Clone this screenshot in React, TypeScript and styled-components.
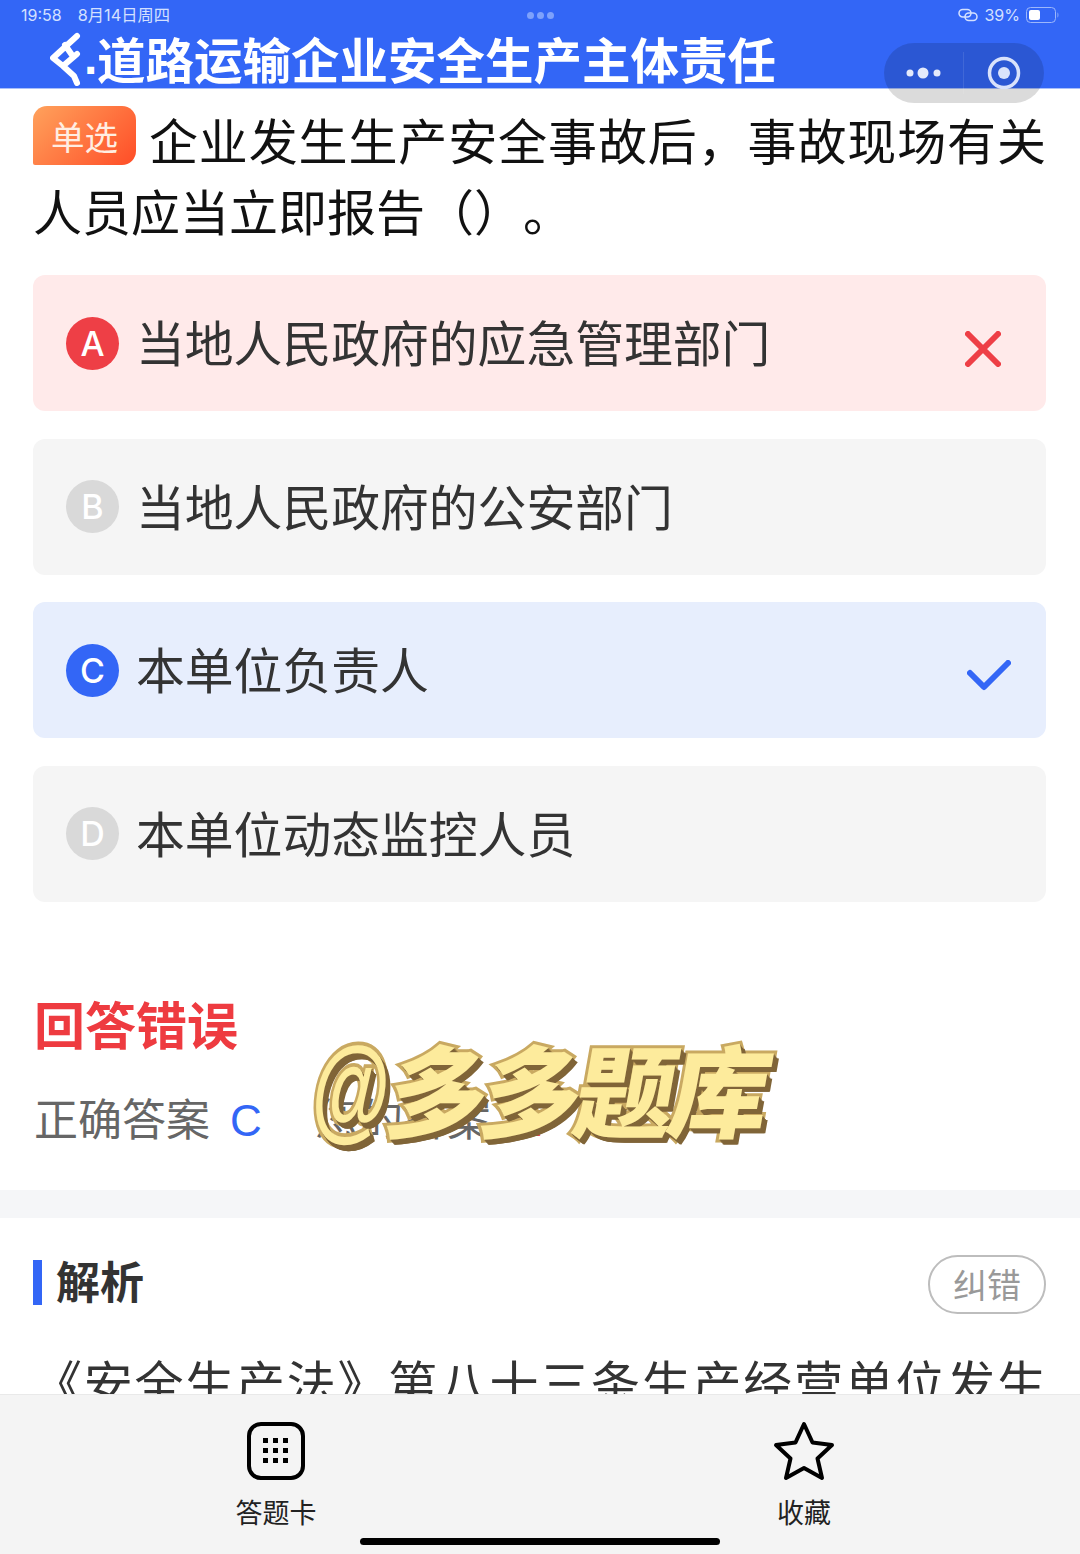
import React from "react";
import styled, { createGlobalStyle } from "styled-components";

const Global = createGlobalStyle`
  html, body { margin: 0; padding: 0; background: #fff; }
  body { font-family: "Noto Sans CJK SC", "Liberation Sans", sans-serif; text-spacing-trim: space-all; }
  * { box-sizing: border-box; }
`;

const Page = styled.div`
  position: relative;
  width: 1080px;
  height: 1554px;
  overflow: hidden;
  display: flex;
  flex-direction: column;
  background: #fff;
`;

const Header = styled.header`
  flex: none;
  height: 89px;
  background: #3366f6;
  border-bottom: 1px solid #a9bffa;
  overflow: hidden;
  color: #fff;
`;

const StatusBar = styled.div`
  height: 30px;
  padding: 0 20px 0 21px;
  display: grid;
  grid-template-columns: 1fr auto 1fr;
  align-items: center;
  font: 16px/20px "Inter", "Noto Sans CJK SC", sans-serif;
  color: #d4e0ff;
`;

const StatusLeft = styled.div`
  display: flex;
  align-items: baseline;
  gap: 16px;
`;

const StatusDate = styled.span`
  font-size: 16.3px;
`;

const StatusRight = styled.div`
  display: flex;
  justify-content: flex-end;
  align-items: center;
  gap: 6px;
`;

const CenterDots = styled.div`
  display: flex;
  gap: 3px;
`;

const CenterDot = styled.i`
  width: 7px;
  height: 7px;
  border-radius: 50%;
  background: #7ea1fb;
`;

const TitleRow = styled.div`
  display: flex;
  align-items: center;
  height: 60px;
  margin-top: -2px;
  padding-left: 50px;
`;

const Title = styled.h1`
  margin: 0;
  font-size: 48.5px;
  line-height: 60px;
  font-weight: 700;
  white-space: nowrap;
`;

const Dot = styled.span`
  width: 13px;
  font-size: 48px;
  line-height: 60px;
  font-weight: 700;
  font-family: "Liberation Sans", sans-serif;
`;

const Capsule = styled.div`
  position: absolute;
  left: 884px;
  top: 43px;
  width: 160px;
  height: 60px;
  border-radius: 30px;
  background: rgba(0, 0, 0, 0.14);
  display: grid;
  grid-template-columns: 80px 80px;
  z-index: 5;
`;

const CapsuleCell = styled.div<{ $line?: boolean }>`
  display: flex;
  align-items: center;
  justify-content: center;
  margin: 9px 0 0;
  height: 42px;
  border-right: ${(p) => (p.$line ? "1px solid rgba(255,255,255,0.1)" : "none")};
`;

const Scroller = styled.main`
  flex: 1;
  min-height: 0;
  overflow: hidden;
`;

const Question = styled.div`
  padding: 14px 34px 0 33px;
  margin-bottom: 30px;
  font-size: 49px;
  line-height: 71px;
  text-align: justify;
  color: #111;
`;

const Tag = styled.span`
  display: inline-block;
  width: 103px;
  height: 59px;
  margin: 0 12px 0 0;
  border-radius: 14px 14px 14px 2px;
  background: linear-gradient(135deg, #ffa25c 0%, #ff4d27 100%);
  color: #ffeee2;
  font-size: 33.5px;
  line-height: 59px;
  text-align: center;
  vertical-align: 10px;
`;

const Options = styled.div`
  display: flex;
  flex-direction: column;
  gap: 27.67px;
  padding: 0 34px 0 33px;
`;

const Option = styled.div<{ $bg: string }>`
  height: 136px;
  padding-left: 33px;
  border-radius: 12px;
  background: ${(p) => p.$bg};
  display: flex;
  align-items: center;
`;

const Letter = styled.span<{ $bg: string }>`
  flex: none;
  width: 53px;
  height: 53px;
  border-radius: 50%;
  background: ${(p) => p.$bg};
  color: #fff;
  font: 500 34px/53px "Inter", "Liberation Sans", sans-serif;
  text-align: center;
`;

const OptionText = styled.span`
  margin: 0 0 4px 17px;
  font-size: 48.8px;
  line-height: 60px;
  color: #333;
  white-space: nowrap;
`;

const Mark = styled.span<{ $right: number }>`
  margin-left: auto;
  margin-right: ${(p) => p.$right}px;
  margin-top: 11px;
  display: flex;
`;

const Result = styled.section`
  padding: 91px 34px 39px;
`;

const Verdict = styled.div`
  font-size: 51px;
  line-height: 60px;
  font-weight: 700;
  color: #ee3b40;
`;

const Answers = styled.div`
  margin-top: 34px;
  display: flex;
  font-size: 44px;
  line-height: 60px;
  color: #666;
`;

const Answer = styled.div`
  width: 281px;
`;

const AnswerLetter = styled.span<{ $color: string }>`
  margin-left: 20px;
  font-family: "Liberation Sans", sans-serif;
  color: ${(p) => p.$color};
`;

const Band = styled.div`
  height: 28px;
  background: #f5f6f8;
`;

const AnalysisHead = styled.div`
  margin-top: 37px;
  padding: 0 34px 0 33px;
  height: 59px;
  display: flex;
  align-items: center;
`;

const AnalysisBar = styled.i`
  width: 9px;
  height: 45px;
  margin-bottom: 4px;
  background: #3366f6;
`;

const AnalysisTitle = styled.h2`
  margin: 0 0 8px 14px;
  font-size: 44px;
  line-height: 56px;
  font-weight: 700;
  color: #333;
`;

const Report = styled.button`
  margin-left: auto;
  width: 118px;
  height: 59px;
  padding: 0;
  border: 2px solid #bdbdbd;
  border-radius: 30px;
  background: #fff;
  color: #999;
  font: 34px/52px "Noto Sans CJK SC", sans-serif;
`;

const Analysis = styled.p`
  margin: 31px 0 0;
  padding: 0 34px 0 33px;
  font-size: 49px;
  line-height: 71px;
  text-align: justify;
  color: #333;
`;

const BottomBar = styled.nav`
  flex: none;
  height: 160px;
  background: #f4f4f4;
  border-top: 1px solid #e9e9e9;
  display: flex;
  justify-content: center;
  gap: 444px;
`;

const NavItem = styled.div`
  width: 84px;
  padding-top: 26px;
  display: flex;
  flex-direction: column;
  align-items: center;
`;

const NavIcon = styled.div`
  height: 60px;
  display: flex;
  align-items: center;
`;

const NavLabel = styled.span`
  margin-top: 11px;
  font-size: 27px;
  line-height: 40px;
  color: #222;
  white-space: nowrap;
`;

const HomeBar = styled.i`
  position: absolute;
  left: 360px;
  bottom: 9px;
  width: 360px;
  height: 7px;
  border-radius: 4px;
  background: #000;
`;

const Watermark = styled.div`
  position: absolute;
  left: 308px;
  top: 1022px;
  z-index: 6;
  display: flex;
  align-items: center;
  font-size: 100px;
  line-height: 130px;
  font-weight: 900;
  letter-spacing: -6px;
  white-space: nowrap;
  color: #fdeb9c;
  -webkit-text-stroke: 6px #c9a961;
  paint-order: stroke fill;
  text-shadow: 1px 1px 0 #806538, 2px 2px 0 #806538, 3px 3px 0 #806538, 4px 4px 0 #806538, 5px 5px 0 #806538, 6px 5px 0 #806538;
`;

const WatermarkAt = styled.span`
  display: inline-block;
  width: 70px;
  font-size: 92px;
  letter-spacing: 0;
  text-align: center;
  font-family: "Liberation Sans", sans-serif;
  transform: skewX(-4deg) scale(0.86, 1.25);
`;

const WatermarkWord = styled.span`
  display: inline-block;
  transform: skewX(-10deg);
  transform-origin: 0 100%;
`;

const Crooked = () => (
  <svg width="34" height="56" viewBox="0 0 34 56" style={{ flex: "none", marginTop: 3 }}>
    <path
      d="M27 4 3 26 13 34 27 22M15 13 22 23M13 34 24 44 27 51"
      fill="none"
      stroke="#fff"
      strokeWidth="6"
      strokeLinejoin="round"
      strokeLinecap="round"
    />
  </svg>
);

const LinkIcon = () => (
  <svg width="20" height="14" viewBox="0 0 20 14" fill="none" stroke="#d4e0ff" strokeWidth="1.5">
    <rect x="1" y="1.500" width="12" height="7.500" rx="3.750" />
    <rect x="7" y="5" width="12" height="7.500" rx="3.750" />
  </svg>
);

const Battery = () => (
  <svg width="34" height="16" viewBox="0 0 34 16">
    <rect x="0.500" y="0.500" width="29" height="15" rx="4" fill="none" stroke="#9db7fb" />
    <rect x="3" y="3" width="11" height="10" rx="2" fill="#fff" />
    <path d="M31.500 5.500c1.200.5 1.200 4.500 0 5z" fill="#9db7fb" />
  </svg>
);

const CapsuleDots = () => (
  <svg width="38" height="14" viewBox="0 0 38 14" fill="#e4eafb">
    <circle cx="5" cy="7" r="3.500" />
    <circle cx="18" cy="7" r="5.500" />
    <circle cx="32" cy="7" r="3.500" />
  </svg>
);

const CapsuleTarget = () => (
  <svg width="36" height="36" viewBox="0 0 36 36">
    <circle cx="18" cy="18" r="14.500" fill="none" stroke="#d9e2fb" strokeWidth="3.500" />
    <circle cx="18" cy="18" r="6" fill="#d9e2fb" />
  </svg>
);

const Cross = () => (
  <svg width="36" height="36" viewBox="0 0 36 36" fill="none" stroke="#ee3f46" strokeWidth="6" strokeLinecap="round">
    <path d="M3 3 33 33M33 3 3 33" />
  </svg>
);

const Check = () => (
  <svg width="44" height="32" viewBox="0 0 44 32" fill="none" stroke="#3366f6" strokeWidth="6" strokeLinecap="round" strokeLinejoin="round">
    <path d="M3 13 17 27 41 3" />
  </svg>
);

const GridIcon = () => (
  <svg width="58" height="58" viewBox="0 0 58 58">
    <rect x="2" y="2" width="54" height="54" rx="12" fill="none" stroke="#000" strokeWidth="4" />
    {[16, 26, 36].flatMap((y) =>
      [16, 26, 36].map((x) => <rect key={`${x}-${y}`} x={x} y={y} width="5" height="5" fill="#000" />)
    )}
  </svg>
);

const StarIcon = () => (
  <svg width="62" height="60" viewBox="0 0 62 60" fill="none" stroke="#000" strokeWidth="4" strokeLinejoin="round">
    <path d="M31 3 39.500 21.500 59 24 44.500 37.500 49 57 31 47 13 57 17.500 37.500 3 24 22.500 21.500Z" />
  </svg>
);

const options = [
  { k: "A", text: "当地人民政府的应急管理部门", bg: "#ffeaea", dot: "#ee3f46", mark: "x" },
  { k: "B", text: "当地人民政府的公安部门", bg: "#f5f5f5", dot: "#d9d9d9" },
  { k: "C", text: "本单位负责人", bg: "#e7eefd", dot: "#3366f6", mark: "c" },
  { k: "D", text: "本单位动态监控人员", bg: "#f5f5f5", dot: "#d9d9d9" },
];

export default function App() {
  return (
    <Page>
      <Global />
      <Header>
        <StatusBar>
          <StatusLeft>
            <span>19:58</span>
            <StatusDate>8月14日周四</StatusDate>
          </StatusLeft>
          <CenterDots>
            <CenterDot />
            <CenterDot />
            <CenterDot />
          </CenterDots>
          <StatusRight>
            <LinkIcon />
            <span>39%</span>
            <Battery />
          </StatusRight>
        </StatusBar>
        <TitleRow>
          <Crooked />
          <Dot>.</Dot>
          <Title>道路运输企业安全生产主体责任</Title>
        </TitleRow>
      </Header>
      <Capsule>
        <CapsuleCell $line>
          <CapsuleDots />
        </CapsuleCell>
        <CapsuleCell>
          <CapsuleTarget />
        </CapsuleCell>
      </Capsule>
      <Scroller>
        <Question>
          <Tag>单选</Tag>
          企业发生生产安全事故后，事故现场有关人员应当立即报告（）。
        </Question>
        <Options>
          {options.map((o) => (
            <Option key={o.k} $bg={o.bg}>
              <Letter $bg={o.dot}>{o.k}</Letter>
              <OptionText>{o.text}</OptionText>
              {o.mark === "x" && (
                <Mark $right={45}>
                  <Cross />
                </Mark>
              )}
              {o.mark === "c" && (
                <Mark $right={35}>
                  <Check />
                </Mark>
              )}
            </Option>
          ))}
        </Options>
        <Result>
          <Verdict>回答错误</Verdict>
          <Answers>
            <Answer>
              正确答案<AnswerLetter $color="#3366f6">C</AnswerLetter>
            </Answer>
            <Answer>
              您的答案<AnswerLetter $color="#ee3f46">A</AnswerLetter>
            </Answer>
          </Answers>
        </Result>
        <Band />
        <AnalysisHead>
          <AnalysisBar />
          <AnalysisTitle>解析</AnalysisTitle>
          <Report>纠错</Report>
        </AnalysisHead>
        <Analysis>《安全生产法》第八十三条生产经营单位发生生产安全事故后，事故现场有关人员应当立即报告本单位负责人。</Analysis>
      </Scroller>
      <BottomBar>
        <NavItem>
          <NavIcon>
            <GridIcon />
          </NavIcon>
          <NavLabel>答题卡</NavLabel>
        </NavItem>
        <NavItem>
          <NavIcon>
            <StarIcon />
          </NavIcon>
          <NavLabel>收藏</NavLabel>
        </NavItem>
      </BottomBar>
      <HomeBar />
      <Watermark>
        <WatermarkAt>@</WatermarkAt>
        <WatermarkWord>多多题库</WatermarkWord>
      </Watermark>
    </Page>
  );
}
